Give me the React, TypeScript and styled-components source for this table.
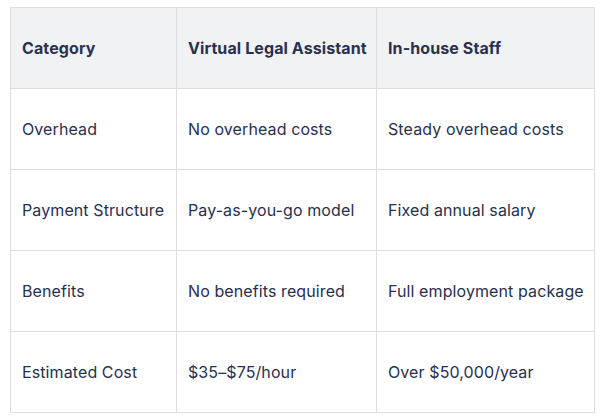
import React from "react";
import styled, { createGlobalStyle } from "styled-components";

const Global = createGlobalStyle`
  html, body { margin: 0; padding: 0; background: #ffffff; }
  body { font-family: Inter, "Noto Sans", Arial, sans-serif; }
`;

const Wrap = styled.div`
  padding: 7px 9px 0 10px;
`;

const Table = styled.table`
  border-collapse: collapse;
  width: 584px;
  table-layout: fixed;
  font-size: 16px;
  letter-spacing: 0.1px;
  color: #27304d;
`;

const Th = styled.th<{ $w: number }>`
  width: ${(p) => p.$w}px;
  height: 81px;
  box-sizing: border-box;
  padding: 0 9px 0 11px;
  text-align: left;
  font-weight: 700;
  background: #f1f2f4;
  border: 1px solid #dddee0;
  color: #2a3150;
  white-space: nowrap;
`;

const Td = styled.td`
  height: 81px;
  box-sizing: border-box;
  padding: 0 9px 0 11px;
  border: 1px solid #dddee0;
  color: #27304d;
  white-space: nowrap;
`;

const rows = [
  ["Overhead", "No overhead costs", "Steady overhead costs"],
  ["Payment Structure", "Pay-as-you-go model", "Fixed annual salary"],
  ["Benefits", "No benefits required", "Full employment package"],
  ["Estimated Cost", "$35–$75/hour", "Over $50,000/year"],
];

export default function App() {
  return (
    <>
      <Global />
      <Wrap>
        <Table>
          <thead>
            <tr>
              <Th $w={166}>Category</Th>
              <Th $w={200}>Virtual Legal Assistant</Th>
              <Th $w={218}>In-house Staff</Th>
            </tr>
          </thead>
          <tbody>
            {rows.map((r) => (
              <tr key={r[0]}>
                {r.map((c) => (
                  <Td key={c}>{c}</Td>
                ))}
              </tr>
            ))}
          </tbody>
        </Table>
      </Wrap>
    </>
  );
}
